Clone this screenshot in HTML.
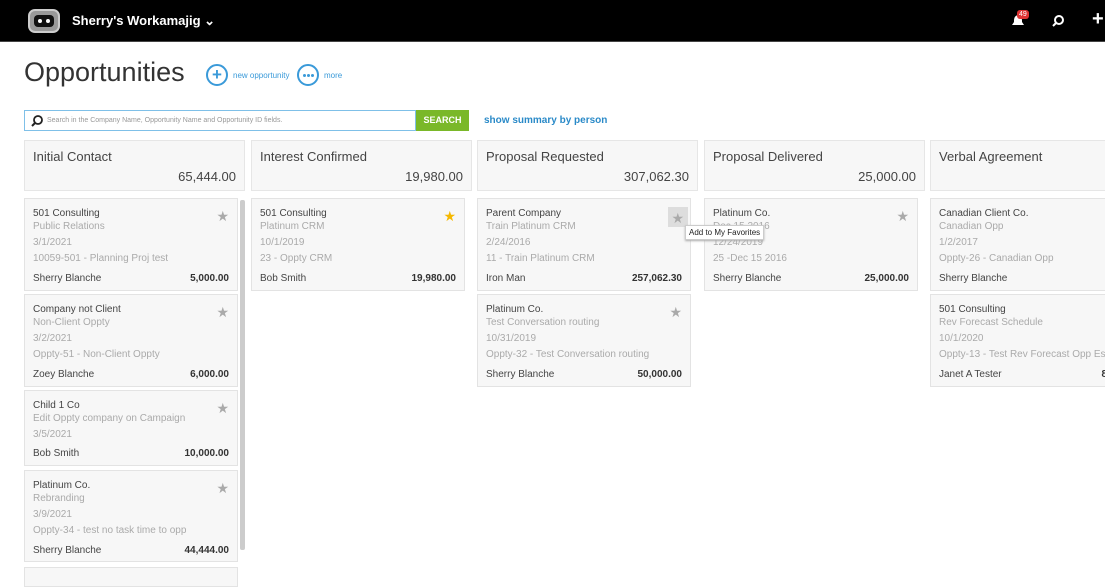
<!DOCTYPE html>
<html><head><style>
*{box-sizing:border-box;margin:0;padding:0}
body{width:1105px;height:575px;overflow:hidden;background:#fff;font-family:"Liberation Sans",sans-serif;color:#333;position:relative}
.top{position:absolute;left:0;top:0;width:1105px;height:42px;background:#000;border-bottom:1px solid #444}
.abs{position:absolute}
.hdr{position:absolute;top:140px;height:51px;width:221px;background:#f7f7f7;border:1px solid #e6e6e6}
.hdr .t{position:absolute;left:8px;top:8px;font-size:13px;color:#444}
.hdr .v{position:absolute;right:8px;top:28px;font-size:13px;color:#444}
.card{position:absolute;width:214px;background:#f7f7f7;border:1px solid #e3e3e3;font-size:10px}
.card .n{position:absolute;left:8px;top:9px;color:#444}
.card .s{position:absolute;left:8px;color:#aaa}
.card .p{position:absolute;left:8px;color:#444}
.card .a{position:absolute;right:8px;color:#333;font-weight:bold}
.star{position:absolute;right:8px;top:10px;font-size:14px;color:#aaa;line-height:14px}
.dot{position:absolute;top:8px;width:3px;height:3px;border-radius:50%;background:#3a9ad9}
</style></head><body>
<div class="top">
 <div class="abs" style="left:28px;top:9px;width:32px;height:24px;border-radius:7px;background:#999;border:2px solid #ccc"><div style="position:absolute;left:4px;top:4px;right:4px;bottom:4px;background:#111;border-radius:4px"></div><div style="position:absolute;left:8px;top:8px;width:4px;height:4px;background:#fff;border-radius:2px"></div><div style="position:absolute;left:16px;top:8px;width:4px;height:4px;background:#fff;border-radius:2px"></div></div>
 <div class="abs" style="left:72px;top:13px;color:#fff;font-weight:bold;font-size:13px">Sherry's Workamajig &#x2304;</div>
 <svg class="abs" style="left:1010px;top:13px" width="16" height="16"><path d="M8 2 C4 3 4 6 4 9 L2 12 H14 L12 9 C12 6 12 3 8 2Z" fill="#fff"/></svg>
 <div class="abs" style="left:1017px;top:10px;background:#d33;color:#fff;font-size:7px;padding:1px 2px;border-radius:3px">49</div>
 <svg class="abs" style="left:1051px;top:14px" width="14" height="14"><circle cx="8" cy="6" r="4" stroke="#fff" stroke-width="2" fill="none"/><path d="M5 9 L2 12" stroke="#fff" stroke-width="2"/></svg>
 <div class="abs" style="left:1092px;top:8px;color:#fff;font-size:20px;font-weight:bold">+</div>
</div>
<div class="abs" style="left:24px;top:57px;font-size:27px;color:#333">Opportunities</div>
<div class="abs" style="left:206px;top:64px;width:22px;height:22px;border:2px solid #3a9ad9;border-radius:50%;color:#3a9ad9;text-align:center;font-weight:bold;font-size:17px;line-height:17px">+</div>
<div class="abs" style="left:233px;top:71px;font-size:8px;color:#3a9ad9">new opportunity</div>
<div class="abs" style="left:297px;top:64px;width:22px;height:22px;border:2px solid #3a9ad9;border-radius:50%"><div class="dot" style="left:4px"></div><div class="dot" style="left:8px"></div><div class="dot" style="left:12px"></div></div>
<div class="abs" style="left:324px;top:71px;font-size:8px;color:#3a9ad9">more</div>
<div class="abs" style="left:24px;top:110px;width:392px;height:21px;border:1px solid #7fc0e8"></div>
<svg class="abs" style="left:30px;top:114px" width="14" height="14"><circle cx="8" cy="6" r="4" stroke="#222" stroke-width="1.8" fill="none"/><path d="M5 9 L2 12" stroke="#222" stroke-width="2"/></svg>
<div class="abs" style="left:47px;top:117px;font-size:7px;color:#999">Search in the Company Name, Opportunity Name and Opportunity ID fields.</div>
<div class="abs" style="left:416px;top:110px;width:53px;height:21px;background:#7ab829;color:#fff;font-size:9px;font-weight:bold;text-align:center;line-height:21px">SEARCH</div>
<div class="abs" style="left:484px;top:115px;font-size:10px;color:#2a8ac8;font-weight:bold">show summary by person</div>

<div class="hdr" style="left:24px"><div class="t">Initial Contact</div><div class="v">65,444.00</div></div>
<div class="hdr" style="left:251px"><div class="t">Interest Confirmed</div><div class="v">19,980.00</div></div>
<div class="hdr" style="left:477px"><div class="t">Proposal Requested</div><div class="v">307,062.30</div></div>
<div class="hdr" style="left:704px"><div class="t">Proposal Delivered</div><div class="v">25,000.00</div></div>
<div class="hdr" style="left:930px;width:180px"><div class="t">Verbal Agreement</div></div>

<div class="abs" style="left:240px;top:200px;width:5px;height:350px;background:#ccc;border-radius:2px"></div>

<div class="card" style="left:24px;top:198px;height:93px"><div class="n">501 Consulting</div><div class="s" style="top:22px">Public Relations</div><div class="s" style="top:38px">3/1/2021</div><div class="s" style="top:54px">10059-501 - Planning Proj test</div><div class="p" style="top:74px">Sherry Blanche</div><div class="a" style="top:74px">5,000.00</div><div class="star">★</div></div>
<div class="card" style="left:24px;top:294px;height:93px"><div class="n">Company not Client</div><div class="s" style="top:22px">Non-Client Oppty</div><div class="s" style="top:38px">3/2/2021</div><div class="s" style="top:54px">Oppty-51 - Non-Client Oppty</div><div class="p" style="top:74px">Zoey Blanche</div><div class="a" style="top:74px">6,000.00</div><div class="star">★</div></div>
<div class="card" style="left:24px;top:390px;height:76px"><div class="n">Child 1 Co</div><div class="s" style="top:22px">Edit Oppty company on Campaign</div><div class="s" style="top:38px">3/5/2021</div><div class="p" style="top:57px">Bob Smith</div><div class="a" style="top:57px">10,000.00</div><div class="star">★</div></div>
<div class="card" style="left:24px;top:470px;height:92px"><div class="n">Platinum Co.</div><div class="s" style="top:22px">Rebranding</div><div class="s" style="top:38px">3/9/2021</div><div class="s" style="top:54px">Oppty-34 - test no task time to opp</div><div class="p" style="top:74px">Sherry Blanche</div><div class="a" style="top:74px">44,444.00</div><div class="star">★</div></div>
<div class="card" style="left:24px;top:567px;height:20px"></div>

<div class="card" style="left:251px;top:198px;height:93px"><div class="n">501 Consulting</div><div class="s" style="top:22px">Platinum CRM</div><div class="s" style="top:38px">10/1/2019</div><div class="s" style="top:54px">23 - Oppty CRM</div><div class="p" style="top:74px">Bob Smith</div><div class="a" style="top:74px">19,980.00</div><div class="star" style="color:#f5b800">★</div></div>

<div class="card" style="left:477px;top:198px;height:93px"><div class="n">Parent Company</div><div class="s" style="top:22px">Train Platinum CRM</div><div class="s" style="top:38px">2/24/2016</div><div class="s" style="top:54px">11 - Train Platinum CRM</div><div class="p" style="top:74px">Iron Man</div><div class="a" style="top:74px">257,062.30</div><div class="abs" style="right:2px;top:8px;width:20px;height:20px;background:#ddd"></div><div class="star" style="right:6px;top:12px">★</div></div>
<div class="card" style="left:477px;top:294px;height:93px"><div class="n">Platinum Co.</div><div class="s" style="top:22px">Test Conversation routing</div><div class="s" style="top:38px">10/31/2019</div><div class="s" style="top:54px">Oppty-32 - Test Conversation routing</div><div class="p" style="top:74px">Sherry Blanche</div><div class="a" style="top:74px">50,000.00</div><div class="star">★</div></div>

<div class="card" style="left:704px;top:198px;height:93px"><div class="n">Platinum Co.</div><div class="s" style="top:22px">Dec 15 2016</div><div class="s" style="top:38px">12/24/2019</div><div class="s" style="top:54px">25 -Dec 15 2016</div><div class="p" style="top:74px">Sherry Blanche</div><div class="a" style="top:74px">25,000.00</div><div class="star">★</div></div>

<div class="card" style="left:930px;top:198px;height:93px;width:180px"><div class="n">Canadian Client Co.</div><div class="s" style="top:22px">Canadian Opp</div><div class="s" style="top:38px">1/2/2017</div><div class="s" style="top:54px">Oppty-26 - Canadian Opp</div><div class="p" style="top:74px">Sherry Blanche</div></div>
<div class="card" style="left:930px;top:294px;height:93px;width:180px"><div class="n">501 Consulting</div><div class="s" style="top:22px">Rev Forecast Schedule</div><div class="s" style="top:38px">10/1/2020</div><div class="s" style="top:54px;white-space:nowrap">Oppty-13 - Test Rev Forecast Opp Estimate</div><div class="p" style="top:74px">Janet A Tester</div><div class="a" style="top:74px;right:2px">8</div></div>

<div class="abs" style="left:685px;top:225px;background:#fff;border:1px solid #ccc;font-size:8px;padding:2px 3px;color:#222;box-shadow:0 1px 2px #aaa">Add to My Favorites</div>
</body></html>
